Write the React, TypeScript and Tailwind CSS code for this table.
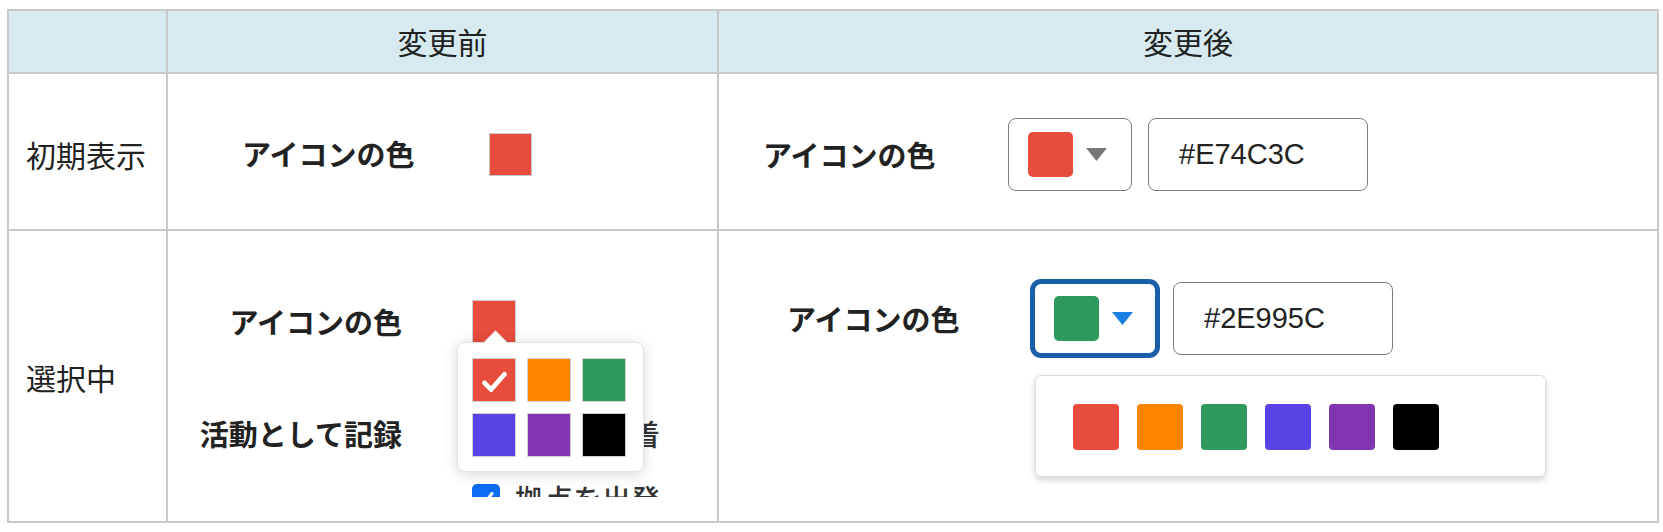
import React from "react";

const JP = "font-['Noto_Sans_CJK_JP','Noto_Sans',sans-serif]";
const LATIN = "font-['Liberation_Sans','Noto_Sans_CJK_JP',sans-serif]";

const palette = ["#e74c3c", "#ff8500", "#2e995c", "#5a43e4", "#8134b0", "#000000"];

function Triangle({ color }: { color: string }) {
  return (
    <svg width="21" height="13" viewBox="0 0 21 13">
      <path d="M0 0 H21 L10.5 13 Z" fill={color} />
    </svg>
  );
}

function ColorSelect({ color, focused }: { color: string; focused?: boolean }) {
  return (
    <div
      className={`flex h-[73px] w-[124px] items-center rounded-[8px] bg-white pl-[19px] ${
        focused
          ? "border-2 border-[#1b5ea9] ring-[3px] ring-[#1b5ea9]"
          : "border-[1.5px] border-[#7a7a7a]"
      }`}
    >
      <div className="h-[45px] w-[45px] rounded-[5px]" style={{ backgroundColor: color }} />
      <div className="ml-[13px]">
        <Triangle color={focused ? "#1a7fe0" : "#777777"} />
      </div>
    </div>
  );
}

function HexInput({ value }: { value: string }) {
  return (
    <div
      className={`ml-[16px] flex h-[73px] w-[220px] items-center rounded-[8px] border-[1.5px] border-[#7a7a7a] bg-white pl-[30px] text-[29px] text-[#222] ${LATIN}`}
    >
      {value}
    </div>
  );
}

function Checkbox() {
  return (
    <div className="flex h-[28px] w-[28px] items-center justify-center rounded-[5px] bg-[#0b6bf2]">
      <svg width="20" height="20" viewBox="0 0 20 20">
        <path d="M4 10.5 L8.5 15 L16 5.5" fill="none" stroke="white" strokeWidth="3" strokeLinecap="round" strokeLinejoin="round" />
      </svg>
    </div>
  );
}

function OldPopover() {
  return (
    <div className="absolute left-[-15px] top-[42px] z-10 h-[130px] w-[187px] rounded-[8px] border border-[#e2e2e2] bg-white pl-[14px] pt-[15px] shadow-[0_2px_14px_rgba(0,0,0,0.16)]">
      <div className="absolute left-[29px] top-[-9px] h-[17px] w-[17px] rotate-45 border-l border-t border-[#e2e2e2] bg-white" />
      <div className="relative grid grid-cols-[44px_44px_44px] gap-[11px]">
        {palette.map((c, i) => (
          <div key={c} className="flex h-[44px] w-[44px] items-center justify-center border border-[#cfcfcf]" style={{ backgroundColor: c }}>
            {i === 0 && (
              <svg width="44" height="44" viewBox="0 0 44 44">
                <path d="M12 25 L19 32 L33 16" fill="none" stroke="white" strokeWidth="5" strokeLinecap="round" strokeLinejoin="round" />
              </svg>
            )}
          </div>
        ))}
      </div>
    </div>
  );
}

export default function App() {
  const cell = "border-b-2 border-r-2 border-[#c8c8c8]";
  return (
    <div className={`h-[532px] w-[1663px] bg-white pl-[7px] pt-[9px] text-[#222] ${JP}`}>
      <div className="grid w-[1652px] grid-cols-[159px_551px_940px] grid-rows-[63px_157px_292px] border-l-2 border-t-2 border-[#c8c8c8]">
        {/* header */}
        <div className={`${cell} bg-[#d6eaf0]`} />
        <div className={`${cell} flex items-center justify-center bg-[#d6eaf0] text-[30px]`}>変更前</div>
        <div className={`${cell} flex items-center justify-center bg-[#d6eaf0] text-[30px]`}>変更後</div>

        {/* 初期表示 */}
        <div className={`${cell} flex items-center pl-[17px] text-[30px]`}>
          <span className="mt-[5px]">初期表示</span>
        </div>
        <div className={`${cell} flex items-center pl-[74px]`}>
          <div className="mt-[5px] flex items-center">
            <div className="w-[247px] text-[29px] font-bold">アイコンの色</div>
            <div className="h-[43px] w-[43px] border border-[#c8c8c8] bg-[#e74c3c]" />
          </div>
        </div>
        <div className={`${cell} flex items-center pl-[44px]`}>
          <div className="mt-[6px] flex items-center">
            <div className="w-[245px] text-[29px] font-bold">アイコンの色</div>
            <ColorSelect color="#e74c3c" />
            <HexInput value="#E74C3C" />
          </div>
        </div>

        {/* 選択中 */}
        <div className={`${cell} flex items-center pl-[17px] text-[30px]`}>
          <span className="mt-[3px]">選択中</span>
        </div>
        <div className={cell}>
          <div className="relative h-[266px] overflow-hidden">
            <div className="mt-[69px] flex h-[44px] items-center">
              <div className="w-[234px] text-right text-[29px] font-bold">アイコンの色</div>
              <div className="relative ml-[70px]">
                <div className="h-[44px] w-[44px] border border-[#cfcfcf] bg-[#e74c3c]" />
                <OldPopover />
              </div>
            </div>
            <div className="mt-[74px] flex">
              <div className="w-[234px] text-right text-[29px] font-bold leading-[30px]">活動として記録</div>
              <div className="ml-[70px] flex flex-col gap-[35px]">
                <div className="flex h-[30px] items-center">
                  <Checkbox />
                  <span className="ml-[15px] text-[29px] font-medium leading-[30px] text-[#333]">拠点に到着</span>
                </div>
                <div className="flex h-[30px] items-center">
                  <Checkbox />
                  <span className="ml-[15px] text-[29px] font-medium leading-[30px] text-[#333]">拠点を出発</span>
                </div>
              </div>
            </div>
          </div>
        </div>
        <div className={`${cell} pl-[68px] pt-[51px]`}>
          <div className="flex items-center">
            <div className="w-[246px] text-[29px] font-bold">アイコンの色</div>
            <ColorSelect color="#2e995c" focused />
            <HexInput value="#2E995C" />
          </div>
          <div className="ml-[248px] mt-[20px] flex h-[102px] w-[511px] items-start gap-[18px] rounded-[6px] border border-[#dcdcdc] bg-white pl-[37px] pt-[28px] shadow-[0_3px_6px_rgba(0,0,0,0.18)]">
            {palette.map((c) => (
              <div key={c} className="h-[46px] w-[46px] rounded-[4px]" style={{ backgroundColor: c }} />
            ))}
          </div>
        </div>
      </div>
    </div>
  );
}
